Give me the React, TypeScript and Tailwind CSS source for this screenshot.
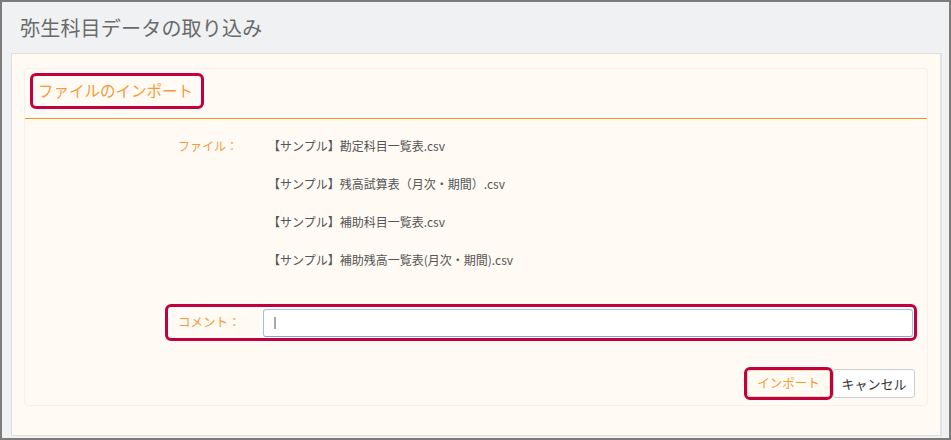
import React from 'react';

const files = [
  '【サンプル】勘定科目一覧表.csv',
  '【サンプル】残高試算表（月次・期間）.csv',
  '【サンプル】補助科目一覧表.csv',
  '【サンプル】補助残高一覧表(月次・期間).csv',
];

const font = { fontFamily: '"Noto Sans CJK JP", "Noto Sans", sans-serif' };

const App = () => {
  return (
    <div
      className="w-[951px] h-[440px] border-2 border-[#7c7c7c] bg-[#f0f1f2] flex flex-col overflow-hidden"
      style={font}
    >
      {/* page title */}
      <div className="h-[51px] flex items-center pl-[18px] shrink-0">
        <h1 className="text-[20px] leading-none text-[#6a6a6a] font-normal tracking-[0.2px]">
          弥生科目データの取り込み
        </h1>
      </div>

      {/* outer panel */}
      <div className="ml-[9px] w-[931px] h-[383px] border border-[#dedede] border-r-2 border-r-[#e2e2e2] bg-[#fffaf3] px-[12px] pt-[14px]">
        <div className="h-[338px] border border-[#f6f0e8] rounded-[4px] flex flex-col">
          {/* section header */}
          <div className="pt-[4px] pb-[9px] border-b border-[#f5931f] pl-[5px]">
            <div className="inline-flex items-center h-[36px] border-[3px] border-[#c2003f] rounded-[6px] pl-[5px] pr-[8px]">
              <span className="text-[15.5px] text-[#f39a3a] leading-none">ファイルのインポート</span>
            </div>
          </div>

          {/* file list */}
          <div className="mt-[8px] flex">
            <div className="w-[238px] pl-[153px] shrink-0">
              <div className="h-[38px] flex items-center text-[12px] text-[#f39a3a]">ファイル：</div>
            </div>
            <div className="flex flex-col pl-[5px]">
              {files.map((f) => (
                <div key={f} className="h-[38px] flex items-center text-[12px] text-[#555555]">
                  {f}
                </div>
              ))}
            </div>
          </div>

          {/* comment */}
          <div className="mt-[25px] ml-[140px] w-[752px] h-[37px] border-[3px] border-[#c2003f] rounded-[6px] flex items-center">
            <div className="w-[95px] pl-[10px] text-[12.5px] text-[#f39a3a] shrink-0">コメント：</div>
            <div className="w-[650px] h-[28px] bg-white border border-[#9cc3ec] border-b-[#8f9fd3] rounded-[3px] flex items-center pl-[10px]">
              <span className="w-[2px] h-[12px] bg-[#a9a9a9]" />
            </div>
          </div>

          {/* actions */}
          <div className="mt-[26px] flex justify-end items-center pr-[12px]">
            <div className="h-[33px] w-[89px] border-[3px] border-[#c2003f] rounded-[6px] flex">
              <button className="flex-1 bg-[#fffaf2] border border-[#f7d9b0] rounded-[3px] text-[12.5px] text-[#f39a3a]">
                インポート
              </button>
            </div>
            <button className="h-[29px] w-[82px] bg-white border border-[#cccccc] rounded-[3px] text-[13px] text-[#333333]">
              キャンセル
            </button>
          </div>
        </div>
      </div>
    </div>
  );
};

export default App;
